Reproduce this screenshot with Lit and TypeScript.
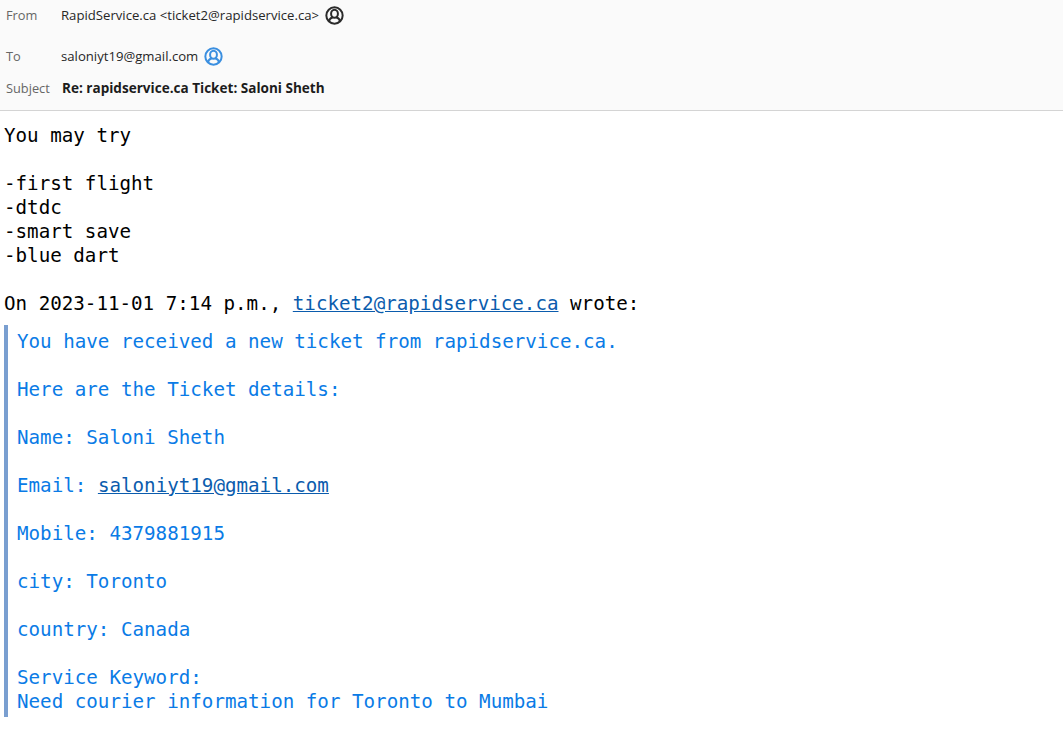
import { LitElement, html, css, svg } from 'lit';
import { customElement } from 'lit/decorators.js';

const personIcon = (color: string) => html`
  <svg class="icon" viewBox="0 0 20 20" fill="none" stroke=${color} stroke-width="2.1">
    <circle cx="10" cy="10" r="8.6"></circle>
    ${svg`<ellipse cx="10" cy="8.2" rx="3.6" ry="4.2"></ellipse>`}
    ${svg`<path d="M4.2 16c.6-2.6 2.2-3.4 3.8-3.8M15.8 16c-.6-2.6-2.2-3.4-3.8-3.8"></path>`}
  </svg>
`;

@customElement('app-root')
export class AppRoot extends LitElement {
  static styles = css`
    :host {
      display: block;
      height: 751px;
      background: #fff;
      overflow: hidden;
    }
    .header {
      height: 111px;
      box-sizing: border-box;
      background: #fafafa;
      border-bottom: 1px solid #d4d4d4;
      padding-left: 6px;
      font-family: "Open Sans", "Noto Sans", sans-serif;
      font-size: 13.15px;
      color: #262626;
    }
    .row {
      display: flex;
      align-items: center;
    }
    .from { height: 30px; }
    .to { height: 24px; margin-top: 14px; }
    .subject { height: 24px; margin-top: 8px; }
    .label {
      width: 55px;
      color: #666;
      font-size: 12.8px;
    }
    .subject .label { width: 56px; }
    .subject b {
      font-weight: 700;
      font-size: 13.55px;
      color: #1c1c1c;
    }
    .icon {
      width: 19px;
      height: 19px;
      margin-left: 6px;
    }
    .body {
      padding: 13px 4px 0;
      font-family: "DejaVu Sans Mono", monospace;
      font-size: 19.2px;
      line-height: 24px;
      color: #000;
    }
    .text {
      white-space: pre;
    }
    a {
      color: #0b5cad;
      text-decoration: underline;
    }
    .quote {
      margin-top: 9px;
      padding: 5px 0 3px 9px;
      border-left: 4px solid #7a9fd0;
      color: #0a7be6;
    }
  `;

  render() {
    return html`
      <div class="header">
        <div class="row from">
          <span class="label">From</span>
          <span>RapidService.ca &lt;ticket2@rapidservice.ca&gt;</span>
          ${personIcon('#2b2b2b')}
        </div>
        <div class="row to">
          <span class="label">To</span>
          <span>saloniyt19@gmail.com</span>
          ${personIcon('#3b8fe0')}
        </div>
        <div class="row subject">
          <span class="label">Subject</span>
          <b>Re: rapidservice.ca Ticket: Saloni Sheth</b>
        </div>
      </div>
      <div class="body">
        <div class="text">You may try

-first flight
-dtdc
-smart save
-blue dart

On 2023-11-01 7:14 p.m., <a>ticket2@rapidservice.ca</a> wrote:</div>
        <div class="text quote">You have received a new ticket from rapidservice.ca.

Here are the Ticket details:

Name: Saloni Sheth

Email: <a>saloniyt19@gmail.com</a>

Mobile: 4379881915

city: Toronto

country: Canada

Service Keyword:
Need courier information for Toronto to Mumbai</div>
      </div>
    `;
  }
}
